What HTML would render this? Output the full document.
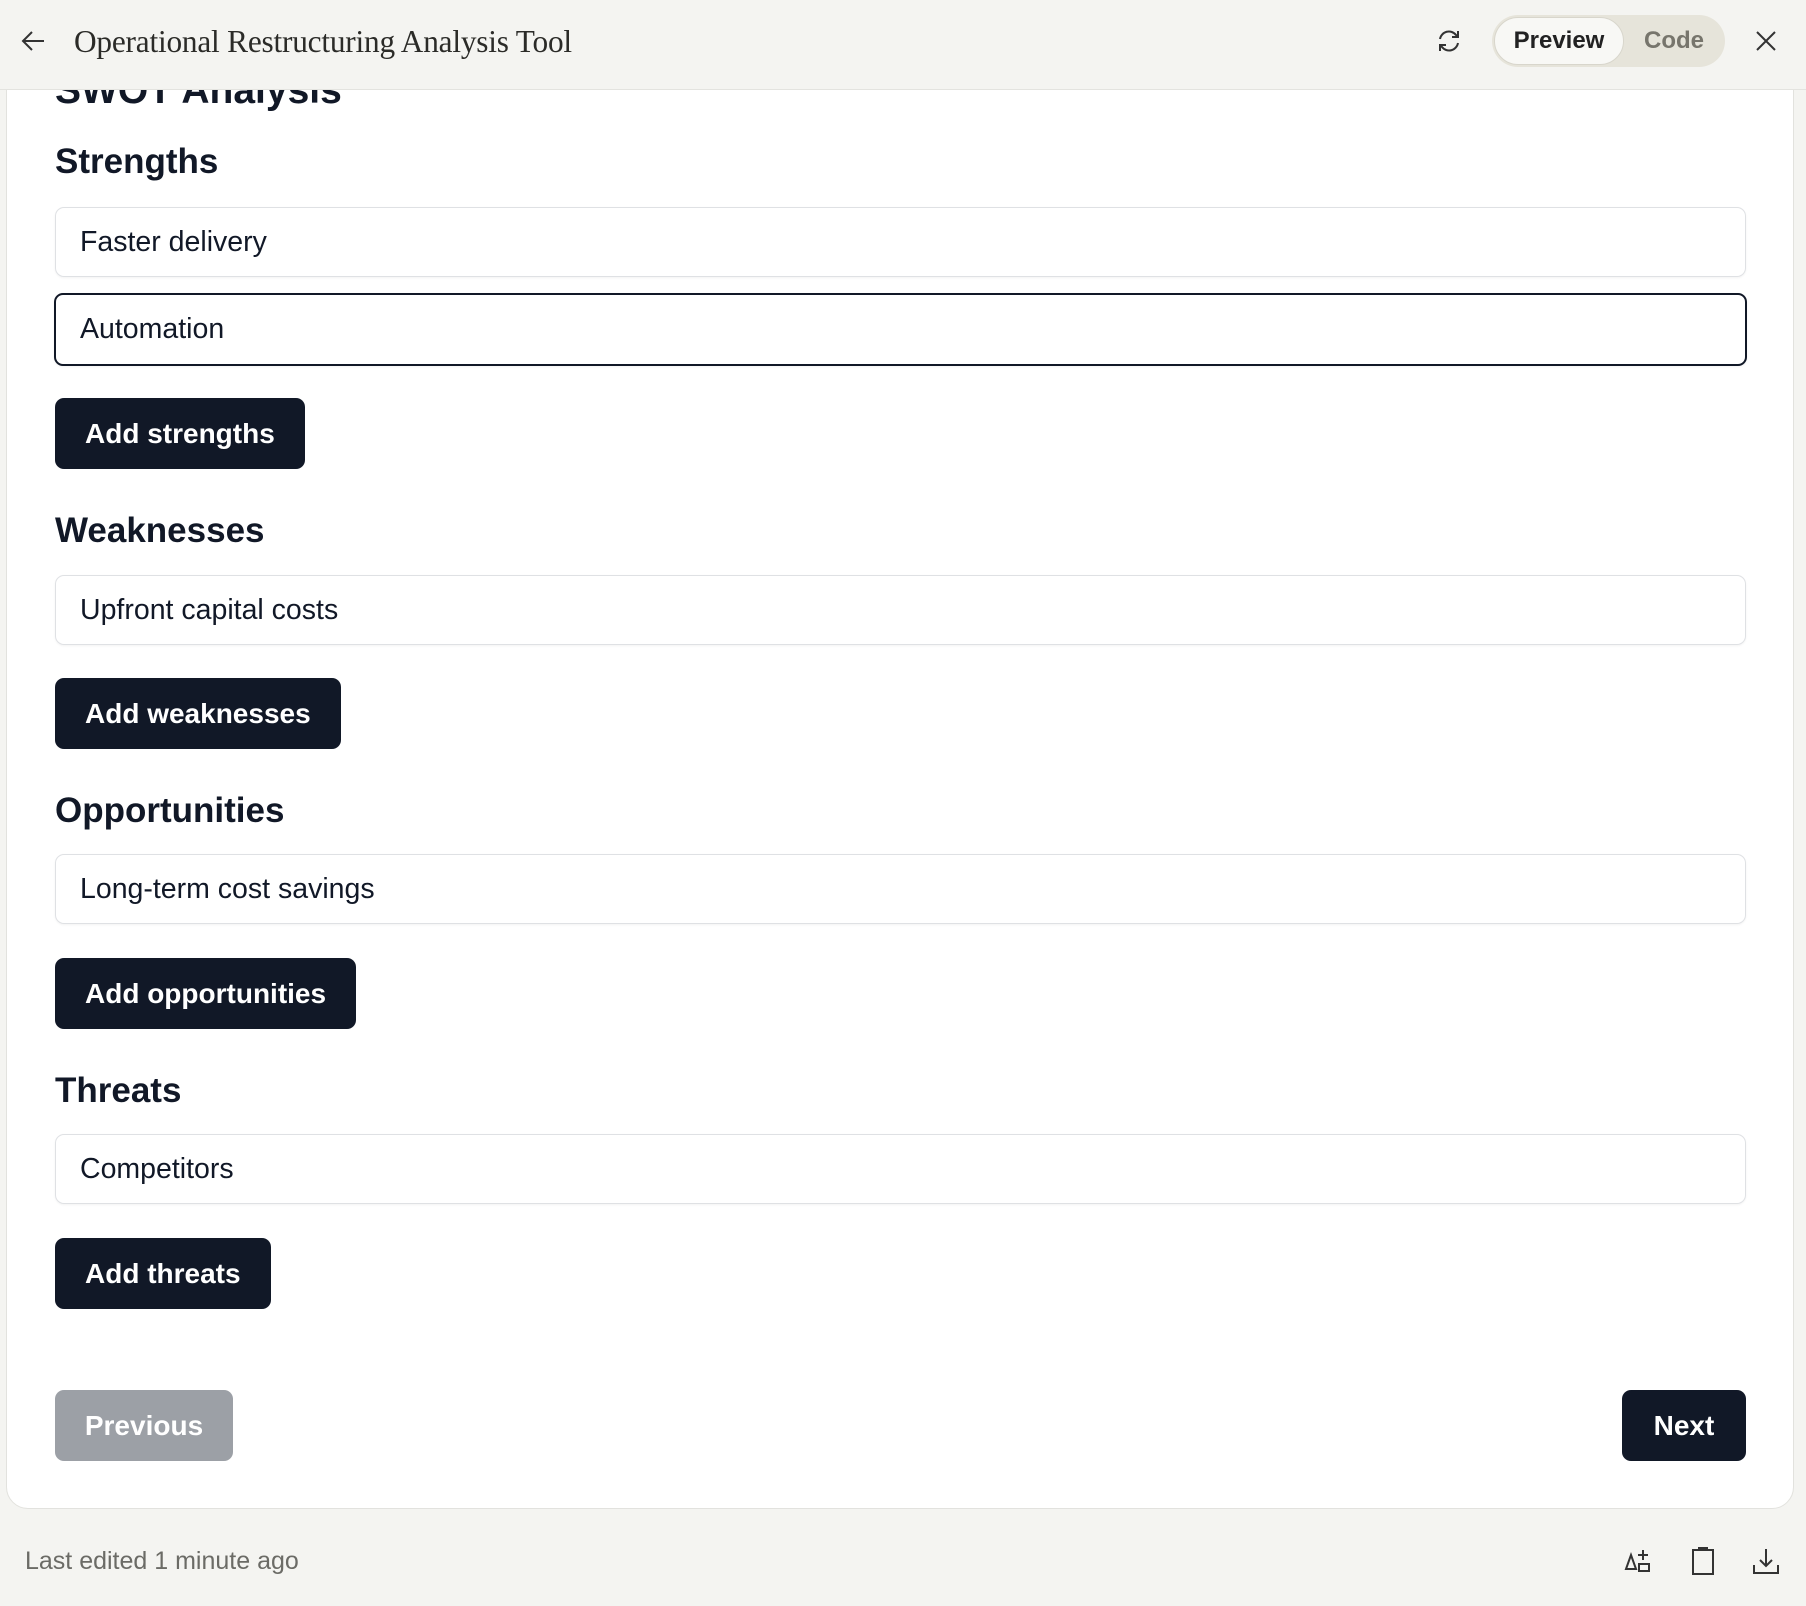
<!DOCTYPE html>
<html><head><meta charset="utf-8"><style>
*{box-sizing:border-box;margin:0;padding:0}
body{width:1806px;height:1606px;background:#f4f4f1;font-family:"Liberation Sans",Arial,sans-serif;color:#111827;position:relative;overflow:hidden}
.hdr{position:absolute;left:0;top:0;width:1806px;height:90px;background:#f4f4f1;border-bottom:1px solid #e3e3df;z-index:5}
.title{position:absolute;left:74px;top:24px;font-family:"Liberation Serif",serif;font-size:31.3px;color:#2b2b28;letter-spacing:-0.2px}
.card{position:absolute;left:6px;top:60px;width:1788px;height:1449px;background:#fff;border:1px solid #e2e2de;border-radius:0 0 22px 22px;overflow:hidden}
.abs{position:absolute}
h1{position:absolute;left:48px;font-size:39px;font-weight:bold}
h2{position:absolute;left:48px;font-size:35px;font-weight:bold;line-height:40px}
.inp{position:absolute;left:48px;width:1691px;height:70px;border:1.5px solid #dfe1e4;border-radius:9px;font-size:28.5px;padding-left:24px;line-height:69px;box-shadow:0 1px 2px rgba(0,0,0,0.05)}
.btn{position:absolute;left:48px;height:71px;background:#111827;color:#fff;border-radius:9px;font-size:28px;font-weight:bold;line-height:71px;padding:0 30px}
.foot{position:absolute;left:25px;top:1547px;font-size:25px;color:#6b6b66}
</style></head><body>
<div class="hdr">
<svg class="abs" style="left:20px;top:29px" width="26" height="24" viewBox="0 0 26 24"><path d="M24 12H3M12 3L3 12l9 9" fill="none" stroke="#333" stroke-width="2"/></svg>
<div class="title">Operational Restructuring Analysis Tool</div>
<svg class="abs" style="left:1435px;top:27px" width="28" height="28" viewBox="0 0 28 28" fill="none" stroke="#333" stroke-width="2"><path d="M5 12a9 9 0 0 1 16-4l2 2M23 4v6h-6M23 16a9 9 0 0 1-16 4l-2-2M5 24v-6h6"/></svg>
<div class="abs" style="left:1492px;top:15px;width:233px;height:52px;background:#e6e4da;border-radius:26px"></div>
<div class="abs" style="left:1494px;top:17px;width:130px;height:48px;background:#f8f8f5;border:1px solid #d8d6cc;border-radius:24px;text-align:center;line-height:46px;font-size:24px;font-weight:bold;color:#222">Preview</div>
<div class="abs" style="left:1624px;top:17px;width:100px;height:48px;text-align:center;line-height:48px;font-size:24px;font-weight:bold;color:#77756c">Code</div>
<svg class="abs" style="left:1754px;top:29px" width="24" height="24" viewBox="0 0 24 24"><path d="M3 3l18 18M21 3L3 21" stroke="#333" stroke-width="2"/></svg>
</div>
<div class="card">
<h1 style="top:8px">SWOT Analysis</h1>
<h2 style="top:81px">Strengths</h2>
<div class="inp" style="top:146px">Faster delivery</div>
<div class="inp" style="top:232px;height:73px;border:2px solid #111827;left:47px;width:1693px">Automation</div>
<div class="btn" style="top:337px">Add strengths</div>
<h2 style="top:450px">Weaknesses</h2>
<div class="inp" style="top:514px">Upfront capital costs</div>
<div class="btn" style="top:617px">Add weaknesses</div>
<h2 style="top:730px">Opportunities</h2>
<div class="inp" style="top:793px">Long-term cost savings</div>
<div class="btn" style="top:897px">Add opportunities</div>
<h2 style="top:1010px">Threats</h2>
<div class="inp" style="top:1073px">Competitors</div>
<div class="btn" style="top:1177px">Add threats</div>
<div class="btn" style="top:1329px;background:#9ca0a6;width:178px;text-align:center;padding:0">Previous</div>
<div class="btn" style="top:1329px;left:1615px;width:124px;text-align:center;padding:0">Next</div>
</div>
<div class="foot">Last edited 1 minute ago</div>
<svg class="abs" style="left:1624px;top:1547px" width="30" height="30" viewBox="0 0 30 30" fill="none" stroke="#333" stroke-width="2"><path d="M2 22L7 8l5 14z M19 3v10M14 8h10M15 17h10v7H15z"/></svg>
<svg class="abs" style="left:1691px;top:1546px" width="24" height="30" viewBox="0 0 24 30" fill="none" stroke="#333" stroke-width="2"><path d="M2 4h20v24H2z M8 4V2h8v2"/></svg>
<svg class="abs" style="left:1752px;top:1547px" width="28" height="28" viewBox="0 0 28 28" fill="none" stroke="#333" stroke-width="2"><path d="M14 2v17M8 13l6 6 6-6M2 18v8h24v-8"/></svg>
</body></html>
